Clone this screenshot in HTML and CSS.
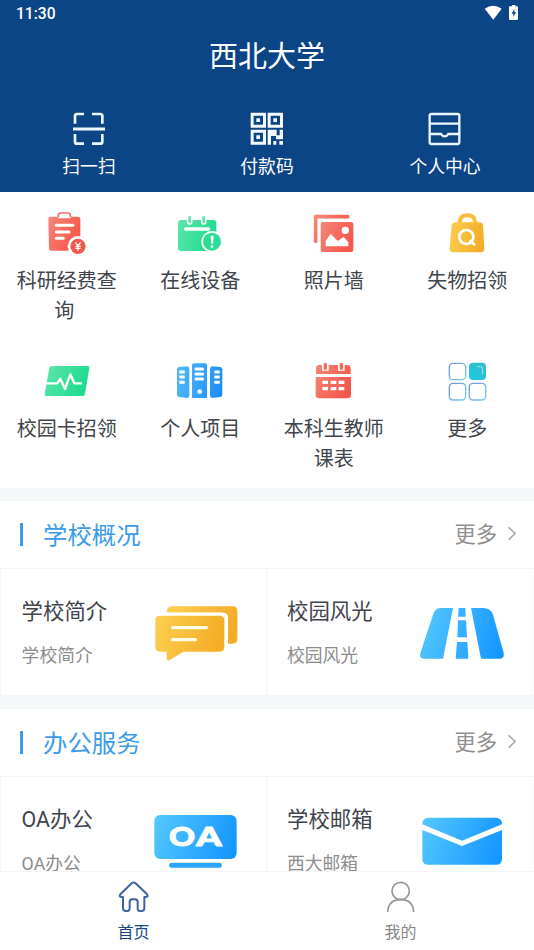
FILE: index.html
```html
<!DOCTYPE html>
<html lang="zh-CN">
<head>
<meta charset="utf-8">
<title>西北大学</title>
<link rel="stylesheet" href="styles.css">
</head>
<body>
<svg class="defs" width="0" height="0">
  <defs>
    <linearGradient id="red" x1="0" y1="0" x2="1" y2=".5"><stop offset="0" stop-color="#f58678"/><stop offset="1" stop-color="#f5584b"/></linearGradient>
    <linearGradient id="green" x1="0" y1="0" x2="1" y2=".3"><stop offset="0" stop-color="#5ee5ae"/><stop offset="1" stop-color="#1fdc8f"/></linearGradient>
    <linearGradient id="gold" x1="0" y1="0" x2="1" y2=".2"><stop offset="0" stop-color="#fbd04f"/><stop offset="1" stop-color="#f5ad28"/></linearGradient>
    <linearGradient id="blue" gradientUnits="userSpaceOnUse" x1="462" y1="350" x2="710" y2="430"><stop offset="0" stop-color="#55c8ff"/><stop offset="1" stop-color="#1496ff"/></linearGradient>
    <linearGradient id="books" gradientUnits="userSpaceOnUse" x1="531" y1="100" x2="667" y2="130"><stop offset="0" stop-color="#4fb9f8"/><stop offset="1" stop-color="#1e8ff8"/></linearGradient>
    <linearGradient id="tile" x1="1" y1="0" x2="0" y2="1"><stop offset="0" stop-color="#35b9c8"/><stop offset="1" stop-color="#18cde3"/></linearGradient>
    <linearGradient id="tileline" x1="0" y1="0" x2="1" y2="1"><stop offset="0" stop-color="#7195ce"/><stop offset="1" stop-color="#79cdec"/></linearGradient>
  </defs>
</svg>
<div class="app">
  <header class="header">
    <div class="status">
      <span>11:30</span>
      <svg class="status-icons" width="36" height="18" viewBox="651 9 108 54">
        <path d="M653 26q25-17 51 0l-25 33z" fill="#fff"/>
        <path d="M735 15h10v4h5q3 0 3 3v35q0 3-3 3h-21q-3 0-3-3V22q0-3 3-3h6z" fill="#fff"/>
        <path d="M742 26l-8 15h5v11l8-16h-5z" fill="#0c4586"/>
      </svg>
    </div>
    <h1 class="title">西北大学</h1>
    <div class="quick">
      <div class="quick-item">
        <svg width="34" height="34" viewBox="216 336 102 102" fill="none" stroke="#eef7ff" stroke-width="8">
          <path d="M225 371v-23q0-6 6-6h21M276 342h25q6 0 6 6v23M225 402v23q0 6 6 6h21M276 431h25q6 0 6-6v-23"/><path d="M219 387h96" stroke-width="9"/>
        </svg>
        <span>扫一扫</span>
      </div>
      <div class="quick-item">
        <svg width="34" height="34" viewBox="750 336 102 102" fill="#f4faff">
          <path fill-rule="evenodd" d="M752 338h46v45h-46zM761 347v27h28v-27zM803 338h46v45h-46zM812 347v27h28v-27zM752 389h46v45h-46zM761 398v27h28v-27z"/>
          <path d="M769 355h11v11h-11zM820 355h11v11h-11zM769 406h11v11h-11zM803 389h27v17h9v-17h10v29h-21v-10h-15v26h-10zM803 389h10v45h-10zM820 423h9v11h-9zM838 423h11v11h-11z"/>
        </svg>
        <span>付款码</span>
      </div>
      <div class="quick-item">
        <svg width="34" height="34" viewBox="482 336 102 102" fill="none" stroke="#eef7ff" stroke-width="7">
          <rect x="487" y="342" width="89" height="90" rx="5"/><path d="M487 371h90M487 402h34q4 7 11 7t11-7h34"/>
        </svg>
        <span>个人中心</span>
      </div>
    </div>
  </header>

  <main class="main">
    <section class="apps">
      <div class="app-item">
        <svg width="46" height="46" viewBox="131 60 138 138">
          <path d="M174 82v-6q0-7 7-7h22q7 0 7 7v6" fill="none" stroke="#ef7467" stroke-width="5"/>
          <path d="M152 80h20v5h40v-5h20q8 0 8 8v86q0 8-8 8h-78q-8 0-8-8l-2-86q0-8 8-8z" fill="url(#red)"/>
          <path d="M168 106h50M168 126h38M168 145h21" stroke="#fff" stroke-width="9" stroke-linecap="round"/>
          <circle cx="233" cy="169" r="31" fill="#fff"/><circle cx="233" cy="169" r="23" fill="#f0594d"/>
          <path d="M225 157l8 10 8-10M233 167v15M225 169h16M225 175h16" fill="none" stroke="#fff" stroke-width="4"/>
        </svg>
        <span>科研经费查询&nbsp;</span>
      </div>
      <div class="app-item">
        <svg width="46" height="46" viewBox="531 60 138 138">
          <rect x="534" y="90" width="115" height="93" rx="9" fill="url(#green)"/>
          <path d="M569 83v13M611 83v13" stroke="#fff" stroke-width="17" stroke-linecap="round"/>
          <path d="M569 82v14M611 82v14" stroke="#5fe6b1" stroke-width="8" stroke-linecap="round"/>
          <path d="M557 117h69" stroke="#fff" stroke-width="10" stroke-linecap="round"/>
          <circle cx="636" cy="155" r="32" fill="#fff"/><circle cx="636" cy="155" r="27" fill="#2cdc94"/>
          <path d="M632 137h9l-2 24h-5z" fill="#fff"/><circle cx="636" cy="170" r="4" fill="#fff"/>
        </svg>
        <span>在线设备</span>
      </div>
      <div class="app-item">
        <svg width="46" height="46" viewBox="131 60 138 138">
          <path d="M145 154V80h96" fill="none" stroke="url(#red)" stroke-width="11" stroke-linecap="round" stroke-linejoin="round"/>
          <rect x="156" y="92" width="106" height="98" rx="9" fill="#fff"/>
          <rect x="160" y="96" width="98" height="90" rx="7" fill="url(#red)"/>
          <circle cx="234" cy="121" r="11" fill="#fff"/><path d="M175 169v-16l15-22 21 22 18-13 14 16v13z" fill="#fff"/>
        </svg>
        <span>照片墙</span>
      </div>
      <div class="app-item">
        <svg width="46" height="46" viewBox="531 60 138 138">
          <path d="M578 102V98q0-22 23-22t23 22v4" fill="none" stroke="#f9bd3c" stroke-width="12"/>
          <path d="M565 97h72q10 0 11 9l4 70q0 11-11 11h-82q-11 0-11-11l6-70q1-9 11-9z" fill="url(#gold)"/>
          <circle cx="598" cy="141" r="21" fill="none" stroke="#fff" stroke-width="8"/><path d="M608 151l16 15" stroke="#fff" stroke-width="8"/>
        </svg>
        <span>失物招领</span>
      </div>
      <div class="app-item">
        <svg width="46" height="46" viewBox="131 54 138 138">
          <path d="M156 78h105q7 0 6 7l-13 76q-1 7-8 7H139q-7 0-6-7l14-76q1-7 9-7z" fill="url(#green)"/>
          <path d="M138 130h33l9-14 14 31 16-44 12 27h23" fill="none" stroke="#fff" stroke-width="7" stroke-linejoin="round"/>
        </svg>
        <span>校园卡招领</span>
      </div>
      <div class="app-item">
        <svg width="46" height="46" viewBox="531 54 138 138">
          <path d="M537 81l25-2q6 2 6 8v79q0 7-6 8l-25-3q-6-1-6-7V88q0-6 6-7zM583 70h32q6 0 6 6v98h-45V76q0-6 7-6zM661 81l-25-2q-6 2-6 8v79q0 7 6 8l25-3q6-1 6-7V88q0-6-6-7z" fill="url(#books)"/>
          <path d="M588 87h20M588 102h20M588 117h20" stroke="#fff" stroke-width="9" stroke-linecap="round"/>
          <path d="M538 96h16M538 111h16M538 127h16M643 96h16M643 111h16M643 127h16" stroke="#fff" stroke-width="9"/>
          <circle cx="599" cy="155" r="7" fill="#fff"/>
        </svg>
        <span>个人项目</span>
      </div>
      <div class="app-item">
        <svg width="46" height="46" viewBox="131 54 138 138">
          <path d="M146 102V85q0-10 10-10h84q10 0 10 10v17zM145 111h106v54q0 10-10 10h-86q-10 0-10-10z" fill="url(#red)"/>
          <path d="M174 70v22M222 70v22" stroke="#fff" stroke-width="20"/>
          <path d="M174 73v12M222 73v12" stroke="#f4675b" stroke-width="10" stroke-linecap="round"/>
          <path d="M165 127h17M190 127h17M214 127h17M165 146h17M190 146h17M214 146h17" stroke="#fff" stroke-width="10"/>
        </svg>
        <span>本科生教师课表</span>
      </div>
      <div class="app-item">
        <svg width="46" height="46" viewBox="531 54 138 138">
          <g fill="#fff" stroke="url(#tileline)" stroke-width="4"><rect x="547" y="70" width="49" height="49" rx="11"/><rect x="547" y="130" width="49" height="50" rx="11"/><rect x="607" y="130" width="49" height="50" rx="11"/></g>
          <rect x="606" y="68" width="51" height="52" rx="12" fill="url(#tile)"/>
          <path d="M630 80h10q7 0 7 8v14" fill="none" stroke="#a9e6ec" stroke-width="3"/>
        </svg>
        <span>更多</span>
      </div>
    </section>

    <section class="panel">
      <div class="panel-head">
        <h2><span>学校概况</span></h2>
        <span class="more">更多</span>
        <svg class="chevron" width="10" height="15" viewBox="0 0 10 15" fill="none" stroke="#a0a0a0" stroke-width="1.3"><path d="M1.5 1.2L8.3 7.5l-6.8 6.3"/></svg>
      </div>
      <div class="cards">
        <article class="card">
          <div><h3>学校简介</h3><p>学校简介</p></div>
          <svg width="84" height="60" viewBox="462 309 252 180">
            <path d="M500 338q0-19 17-19h181q14 0 14 14v84q0 14-14 14h-14v-78q0-15-15-15z" fill="url(#gold)"/>
            <path d="M666 342q12 2 12 16v80" fill="none" stroke="#fff" stroke-width="9"/><path d="M500 342h166" stroke="#fff" stroke-width="9"/>
            <path d="M480 347h179q14 0 14 14v80q0 14-14 14h-109l-42 26q-7 3-8-4v-22h-20q-14 0-14-14v-80q0-14 14-14z" fill="url(#gold)"/>
            <path d="M518 383h101M518 419h68" stroke="#fffbe8" stroke-width="10" stroke-linecap="round"/>
          </svg>
        </article>
        <article class="card">
          <div><h3>校园风光</h3><p>校园风光</p></div>
          <svg width="84" height="60" viewBox="459 309 252 180">
            <path d="M520 324h38l-30 152h-55q-17 0-13-16l38-116q7-20 22-20zM612 324h37q22 0 29 20l32 115q3 17-13 17h-55zM575 324h20l1 26h-23zM573 361h24l3 51h-29zM570 426h31l3 50h-38z" fill="url(#blue)"/>
          </svg>
        </article>
      </div>
    </section>

    <section class="panel">
      <div class="panel-head">
        <h2><span>办公服务</span></h2>
        <span class="more">更多</span>
        <svg class="chevron" width="10" height="15" viewBox="0 0 10 15" fill="none" stroke="#a0a0a0" stroke-width="1.3"><path d="M1.5 1.2L8.3 7.5l-6.8 6.3"/></svg>
      </div>
      <div class="cards">
        <article class="card">
          <div><h3>OA办公</h3><p>OA办公</p></div>
          <svg width="84" height="60" viewBox="462 333 252 180">
            <rect x="463" y="345" width="247" height="132" rx="18" fill="url(#blue)"/>
            <path d="M515 496h143" stroke="#2ba5fc" stroke-width="15" stroke-linecap="round"/>
            <text class="oa" y="437"><tspan x="507" textLength="78" lengthAdjust="spacingAndGlyphs">O</tspan><tspan x="589" textLength="76" lengthAdjust="spacingAndGlyphs">A</tspan></text>
          </svg>
        </article>
        <article class="card">
          <div><h3>学校邮箱</h3><p>西大邮箱</p></div>
          <svg width="84" height="60" viewBox="459 333 252 180">
            <path d="M466 373q0-20 19-20h201q19 0 19 20l-120 49zM466 390l119 48 120-48v86q0 18-18 18H484q-18 0-18-18z" fill="url(#blue)"/>
          </svg>
        </article>
      </div>
    </section>
  </main>

  <nav class="nav">
    <div class="nav-item active">
      <svg width="34" height="34" viewBox="350 540 102 102" fill="none" stroke="#3d649f" stroke-width="6" stroke-linejoin="round">
        <path d="M394 550q6-5 12 0l34 33q5 7-3 8h-5v34q0 8-8 8h-6q-6 0-6-8v-19q0-8-8-8h-8q-8 0-8 8v19q0 8-7 8h-5q-8 0-8-8v-34h-5q-8-1-3-8z"/>
      </svg>
      <span>首页</span>
    </div>
    <div class="nav-item">
      <svg width="34" height="34" viewBox="350 540 102 102" fill="none" stroke="#999" stroke-width="5">
        <circle cx="400" cy="573" r="26"/><path d="M361 636q2-37 39-37t39 37"/>
      </svg>
      <span>我的</span>
    </div>
  </nav>
</div>
</body>
</html>
```
FILE: styles.css
```css
* { box-sizing: border-box; margin: 0; padding: 0; }
body {
  font-family: Roboto, "Noto Sans CJK SC", sans-serif;
  color: #40454b;
  background: #fff;
}
h1, h2, h3 { font-weight: 400; }
svg { display: block; flex: none; }
.defs { position: absolute; }
.app { width: 534px; height: 950px; display: flex; flex-direction: column; overflow: hidden; }

.header { height: 192px; flex: none; background: #0c4586; color: #fff; }
.status {
  height: 28px;
  padding: 0 14px 0 16px;
  display: flex;
  justify-content: space-between;
  align-items: center;
  font-size: 15.6px;
  font-weight: 500;
}
.status-icons { margin-top: -4px; }
.title { height: 56px; padding-top: 1px; line-height: 56px; text-align: center; font-size: 29px; }
.quick { display: grid; grid-template-columns: repeat(3, 1fr); padding-top: 28px; }
.quick-item { display: flex; flex-direction: column; align-items: center; }
.quick-item span { margin-top: 8px; font-size: 17.8px; line-height: 26px; }

.main { flex: 1; min-height: 0; overflow: hidden; background: #f5f8f9; }
.apps {
  display: grid;
  grid-template-columns: repeat(4, 1fr);
  grid-auto-rows: 148px;
  background: #fff;
}
.app-item { display: flex; flex-direction: column; align-items: center; padding-top: 18px; }
.app-item span {
  width: 102px;
  margin-top: 11px;
  font-size: 20px;
  line-height: 29.5px;
  text-align: center;
}

.panel { margin-top: 13px; background: #fff; }
.panel + .panel { margin-top: 14px; }
.panel-head { height: 67px; display: flex; align-items: center; padding: 0 17px 0 20px; }
.panel-head h2 {
  flex: 1;
  height: 23px;
  padding-left: 20px;
  border-left: 3px solid #3c9be8;
  color: #3c9be8;
  font-size: 24.4px;
  line-height: 25px;
}
.more { margin: -4px 10px 0 0; color: #909090; font-size: 21.3px; }
.chevron { margin-top: -2px; }
.cards { display: grid; grid-template-columns: 266px 267px; border-top: 1px solid #f3f6f7; }
.card {
  height: 126px;
  display: flex;
  justify-content: space-between;
  padding: 34px 28px 0 20.6px;
  border-left: 1px solid #f3f6f7;
}
.card:last-child { padding-left: 20px; border-right: 1px solid #f3f6f7; }
.card h3 { margin-top: -7px; font-size: 21.4px; line-height: 32px; }
.card p { margin-top: 15px; color: #8c8c8c; font-size: 17.8px; line-height: 26px; }
.oa {
  font-family: Lato, sans-serif;
  font-weight: 900;
  font-size: 80px;
  fill: #fff;
  stroke: #fff;
  stroke-width: 3px;
  stroke-linejoin: round;
}

.nav { height: 79px; flex: none; display: grid; grid-template-columns: 1fr 1fr; background: #fff; border-top: 1px solid #f4f5f5; }
.nav-item { display: flex; flex-direction: column; align-items: center; padding-top: 8px; color: #888; }
.nav-item span { margin-top: 7px; font-size: 16px; line-height: 24px; }
.nav-item.active { color: #174884; }
```
